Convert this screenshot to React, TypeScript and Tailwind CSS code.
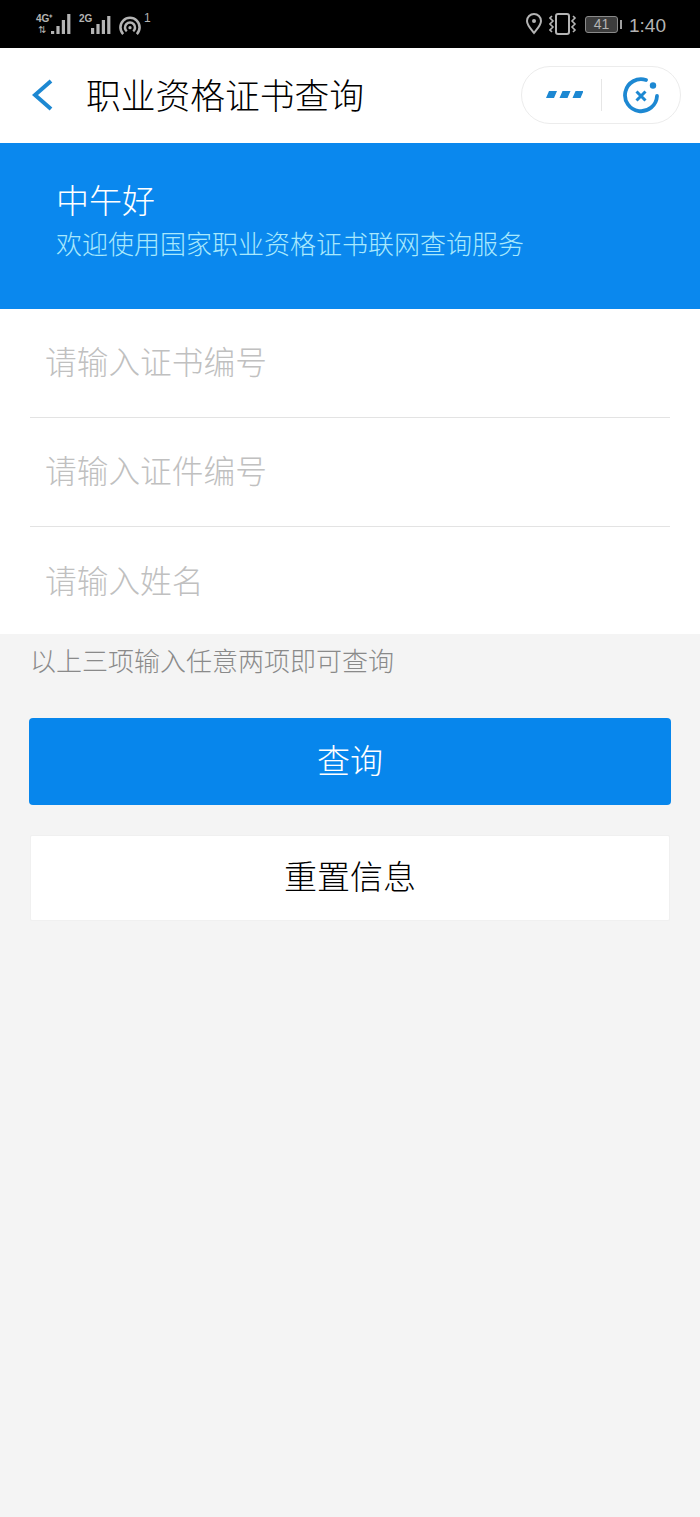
import React from 'react';

const cjk = { fontFamily: '"Noto Sans CJK SC", "Noto Sans", sans-serif' };
const latin = { fontFamily: '"Liberation Sans", sans-serif' };

const SignalBars = ({ bars }: { bars: number[] }) => (
  <svg width="22" height="21" viewBox="0 0 22 21" fill="#b4b4b4">
    {bars.map((h, i) => (
      <rect key={i} x={i * 5.4 + 1} y={21 - h} width="3.2" height={h} />
    ))}
  </svg>
);

const StatusBar = () => (
  <div className="flex h-[48px] justify-between bg-black pl-[36px] pr-[34px] text-[#b4b4b4]">
    <div className="mt-[12px] flex items-start">
      <div className="relative h-[22px] w-[36px]">
        <span className="absolute left-0 top-[1px] text-[10px] font-bold leading-[12px]" style={latin}>4G⁺</span>
        <span className="absolute left-[2px] top-[13px] text-[10px] leading-[10px]" style={latin}>⇅</span>
        <div className="absolute bottom-0 right-0 flex">
          <SignalBars bars={[3, 8, 14, 20]} />
        </div>
      </div>
      <div className="relative ml-[7px] h-[22px] w-[33px]">
        <span className="absolute left-0 top-[1px] text-[10px] font-bold leading-[12px]" style={latin}>2G</span>
        <div className="absolute bottom-0 right-0 flex">
          <SignalBars bars={[6, 10, 14, 18]} />
        </div>
      </div>
      <svg width="22" height="21" viewBox="0 0 24 23" fill="none" stroke="currentColor" strokeWidth="2.8" className="ml-[7px] mt-[2px]">
        <path d="M4.5 22a10.5 10.5 0 1 1 15 0" />
        <path d="M8.5 19a5.5 5.5 0 1 1 7 0" />
        <circle cx="12" cy="15" r="1.8" fill="currentColor" stroke="none" />
      </svg>
      <span className="ml-[3px] mt-[-1px] text-[12px] leading-[14px]" style={latin}>1</span>
    </div>
    <div className="flex items-center">
      <svg width="16" height="22" viewBox="0 0 16 22" fill="none" stroke="currentColor" strokeWidth="2">
        <path d="M8 20c4-5 7-8 7-12A7 7 0 0 0 1 8c0 4 3 7 7 12z" />
        <circle cx="8" cy="8" r="2" fill="currentColor" stroke="none" />
      </svg>
      <svg width="28" height="24" viewBox="0 0 28 24" fill="none" stroke="currentColor" strokeWidth="2" className="ml-[7px]">
        <rect x="7" y="2" width="13" height="20" rx="2" />
        <path d="M3 4l-2 2 3 3-3 3 3 3-3 3 2 2" strokeWidth="1.6" />
        <path d="M24 4l2 2-3 3 3 3-3 3 3 3-2 2" strokeWidth="1.6" />
      </svg>
      <div className="ml-[8px] flex items-center">
        <div className="flex h-[17px] w-[33px] items-center justify-center rounded-[3px] border border-[#8a8a8a] bg-[#3d3d3d] text-[14px] leading-none" style={latin}>
          41
        </div>
        <div className="ml-[2px] h-[9px] w-[2px] bg-[#a0a0a0]" />
      </div>
      <span className="ml-[7px] mt-[2px] text-[19px] leading-none" style={latin}>1:40</span>
    </div>
  </div>
);

const NavBar = () => (
  <div className="flex h-[95px] items-center justify-between bg-white pb-[2px] pl-[32px] pr-[19px]">
    <div className="flex items-center">
      <svg width="22" height="32" viewBox="0 0 22 32" fill="none" stroke="#1d88d2" strokeWidth="4">
        <path d="M19 2L3 16l16 14" />
      </svg>
      <span className="relative top-[-1px] ml-[32px] text-[34.75px] font-light leading-[48px] text-black" style={cjk}>职业资格证书查询</span>
    </div>
    <div className="flex h-[58px] w-[160px] items-center rounded-full border border-[#ececec] bg-white">
      <div className="flex w-[79px] justify-center pl-[5px]">
        <svg width="37" height="8" viewBox="0 0 37 8" fill="#1d88d2">
          <path d="M3 0h8l-3 7H0zM16.5 0h8l-3 7h-8zM29.5 0h8l-3 7h-8z" />
        </svg>
      </div>
      <div className="h-[32px] w-px bg-[#e6e6e6]" />
      <div className="flex flex-1 justify-center">
        <svg width="38" height="38" viewBox="0 0 38 38" fill="none" stroke="#1d88d2" strokeWidth="3.8">
          <path d="M35 20A16 16 0 1 1 24 4" strokeLinecap="round" />
          <path d="M14.5 15.5l9 9M23.5 15.5l-9 9" strokeWidth="3" />
          <circle cx="31" cy="9.5" r="3.2" fill="#1d88d2" stroke="none" />
        </svg>
      </div>
    </div>
  </div>
);

const Field = ({ label, last }: { label: string; last?: boolean }) => (
  <div className={`flex items-center ${last ? 'h-[107px] pb-[4px]' : 'h-[109px] border-b border-[#e3e3e3] pb-[6px]'}`}>
    <span className="pl-[15px] text-[31.7px] font-light leading-[44px] text-[#c0c0c0]" style={cjk}>{label}</span>
  </div>
);

export default function App() {
  return (
    <div className="flex h-[1517px] w-[700px] flex-col overflow-hidden bg-[#f4f4f4]" style={cjk}>
      <StatusBar />
      <NavBar />
      <div className="flex h-[166px] flex-col bg-[#0a88ee] pl-[56px] pt-[33px]">
        <span className="text-[33px] font-light leading-[46px] text-white">中午好</span>
        <span className="mt-[3px] text-[26px] font-light leading-[36px] text-[#a8e8fd]">欢迎使用国家职业资格证书联网查询服务</span>
      </div>
      <div className="bg-white px-[30px]">
        <Field label="请输入证书编号" />
        <Field label="请输入证件编号" />
        <Field label="请输入姓名" last />
      </div>
      <p className="pl-[30px] pt-[8px] text-[26px] font-light leading-[36px] text-[#8a8a8a]">以上三项输入任意两项即可查询</p>
      <div className="mt-[40px] flex flex-col px-[29px]">
        <button className="flex h-[87px] items-center justify-center rounded-[4px] bg-[#0786ec] pb-[4px] text-[33px] font-light text-white">查询</button>
        <button className="mx-px mt-[30px] flex h-[86px] items-center justify-center rounded-[2px] border border-[#f0f0f0] bg-white pb-[4px] text-[33px] font-light text-black">重置信息</button>
      </div>
    </div>
  );
}
